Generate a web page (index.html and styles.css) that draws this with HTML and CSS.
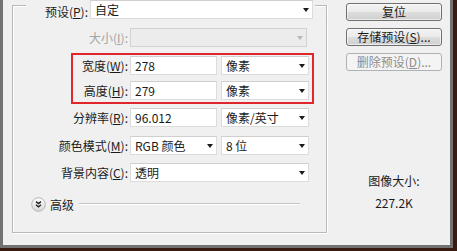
FILE: index.html
```html
<!DOCTYPE html>
<html lang="zh-CN">
<head>
<meta charset="utf-8">
<title>新建</title>
<link rel="stylesheet" href="styles.css">
</head>
<body>
<div class="window">
  <div class="frame">
    <div class="dialog">
      <div class="group">
        <div class="legend-row">
          <div class="corner corner-l"></div>
          <label class="legend-label">预设(<u>P</u>):</label>
          <div class="field select preset"><span>自定</span><i class="arrow"></i></div>
          <div class="corner corner-r"></div>
        </div>
        <div class="box">
          <div class="row r-size disabled">
            <label class="lbl">大小(<u>I</u>):</label>
            <div class="field select size-sel"><span></span><i class="arrow"></i></div>
          </div>
          <div class="row r-width">
            <label class="lbl">宽度(<u>W</u>):</label>
            <div class="field input num"><span>278</span></div>
            <div class="field select unit"><span>像素</span><i class="arrow"></i></div>
          </div>
          <div class="row r-height">
            <label class="lbl">高度(<u>H</u>):</label>
            <div class="field input num"><span>279</span></div>
            <div class="field select unit"><span>像素</span><i class="arrow"></i></div>
          </div>
          <div class="row r-res">
            <label class="lbl">分辨率(<u>R</u>):</label>
            <div class="field input num"><span>96.012</span></div>
            <div class="field select unit"><span>像素/英寸</span><i class="arrow"></i></div>
          </div>
          <div class="row r-mode">
            <label class="lbl">颜色模式(<u>M</u>):</label>
            <div class="field select num"><span>RGB 颜色</span><i class="arrow"></i></div>
            <div class="field select unit"><span>8 位</span><i class="arrow"></i></div>
          </div>
          <div class="row r-bg">
            <label class="lbl">背景内容(<u>C</u>):</label>
            <div class="field select wide"><span>透明</span><i class="arrow"></i></div>
          </div>
          <div class="advanced">
            <svg class="adv-icon" width="15" height="15" viewBox="0 0 15 15">
              <defs>
                <linearGradient id="g" x1="0" y1="0" x2="0" y2="1">
                  <stop offset="0" stop-color="#ffffff"/>
                  <stop offset="1" stop-color="#d6d6d6"/>
                </linearGradient>
              </defs>
              <circle cx="7.5" cy="7.5" r="6.8" fill="url(#g)" stroke="#b4b4b4" stroke-width="1"/>
              <path d="M5 4.6 L7.5 6.6 L10 4.6 M5 7.8 L7.5 9.8 L10 7.8" fill="none" stroke="#222" stroke-width="1.4"/>
            </svg>
            <span class="adv-text">高级</span>
            <div class="adv-line"></div>
          </div>
          <div class="highlight"></div>
        </div>
      </div>
      <div class="side">
        <button class="btn">复位</button>
        <button class="btn">存储预设(<u>S</u>)...</button>
        <button class="btn" disabled>删除预设(<u>D</u>)...</button>
        <div class="img-size">
          <div class="img-size-label">图像大小:</div>
          <div class="img-size-value">227.2K</div>
        </div>
      </div>
    </div>
  </div>
</div>
</body>
</html>
```

FILE: styles.css
```css
* { box-sizing: border-box; }
html, body { margin: 0; padding: 0; }
body {
  font-family: "Noto Sans CJK SC", "Noto Sans", sans-serif;
  font-size: 12px;
  color: #1b1b1b;
  background: #3a1b12;
}
u { text-decoration: underline; text-underline-offset: 1px; }

.window {
  width: 457px;
  height: 251px;
  background: #3a1b12;
  overflow: hidden;
}
.frame {
  width: 453px;
  height: 248px;
  background: #727272;
  padding: 0 3px 3px 3px;
}
.dialog {
  width: 447px;
  height: 245px;
  background: #f0f0f0;
  display: flex;
  align-items: flex-start;
}

/* group box */
.group {
  margin-left: 9px;
  width: 315px;
  display: flex;
  flex-direction: column;
}
.legend-row {
  display: flex;
  height: 20px;
  align-items: flex-start;
}
.corner {
  margin-top: 5px;
  height: 15px;
  border-top: 1px solid #b9b9b9;
  box-shadow: inset 0 1px 0 #fff;
}
.corner-l {
  width: 14px;
  border-left: 1px solid #b9b9b9;
  box-shadow: inset 1px 1px 0 #fff;
}
.corner-r {
  flex: 1;
  margin-left: 2px;
  border-right: 1px solid #b9b9b9;
  box-shadow: inset 0 1px 0 #fff, 1px 0 0 #fff;
}
.legend-label {
  width: 62px;
  text-align: right;
  line-height: 24px;
  height: 20px;
}
.preset {
  margin-left: 2px;
  width: 223px;
  height: 20px;
}

.box {
  position: relative;
  height: 213px;
  border: 1px solid #b9b9b9;
  border-top: none;
  box-shadow: inset 1px 0 0 #fff, 1px 1px 0 #fff;
  display: flex;
  flex-direction: column;
}

.row {
  display: flex;
  align-items: center;
  height: 19px;
}
.lbl {
  width: 115px;
  text-align: right;
  margin-right: 2px;
  white-space: nowrap;
}
.disabled .lbl { color: #a3a3a3; }

.r-size { margin-top: 8px; }
.r-width { margin-top: 9px; }
.r-height { margin-top: 6px; }
.r-res { margin-top: 8px; }
.r-mode { margin-top: 9px; }
.r-bg { margin-top: 8px; }

.field {
  height: 19px;
  background: #fff;
  border: 1px solid #dcdcdc;
  border-top-color: #cfcfcf;
  display: flex;
  align-items: center;
  padding-left: 4px;
  white-space: nowrap;
}
.field span { flex: 1; }
.select { padding-right: 3px; }
.arrow {
  width: 0;
  height: 0;
  border-left: 3.5px solid transparent;
  border-right: 3.5px solid transparent;
  border-top: 4px solid #1a1a1a;
  margin-top: 1px;
}
.num { width: 87px; }
.unit { width: 88px; margin-left: 4px; }
.wide { width: 179px; }
.size-sel {
  width: 177px;
  background: #ececec;
  border-color: #d2d2d2;
}
.size-sel .arrow { border-top-color: #b8b8b8; }

.advanced {
  display: flex;
  align-items: center;
  margin-top: 14px;
  margin-left: 18px;
  height: 16px;
}
.adv-icon { display: block; }
.adv-text {
  margin-left: 4px;
  color: #1b1b1b;
}
.adv-line {
  margin-left: 5px;
  width: 221px;
  height: 2px;
  border-top: 1px solid #c4c4c4;
  border-bottom: 1px solid #fff;
}

.highlight {
  position: absolute;
  left: 58px;
  top: 33px;
  width: 243px;
  height: 51px;
  border: 2px solid #e0262a;
  pointer-events: none;
}

/* side */
.side {
  margin-left: 19px;
  width: 96px;
  display: flex;
  flex-direction: column;
}
.btn {
  font-family: inherit;
  font-size: 12px;
  color: #1b1b1b;
  width: 96px;
  height: 18px;
  padding: 0;
  line-height: 16px;
  border: 1px solid #707070;
  border-radius: 3px;
  background: linear-gradient(to bottom, #f3f3f3 0%, #ebebeb 48%, #dddddd 52%, #cfcfcf 100%);
  box-shadow: inset 0 0 0 1px rgba(255,255,255,0.6);
  margin-top: 7px;
}
.btn:first-child { margin-top: 3px; }
.btn:disabled {
  color: #8c8c8c;
  border-color: #adb2b5;
  background: #f4f4f4;
  box-shadow: none;
}
.img-size {
  margin-top: 101px;
  text-align: center;
}
.img-size-value {
  margin-top: 5px;
}
```
